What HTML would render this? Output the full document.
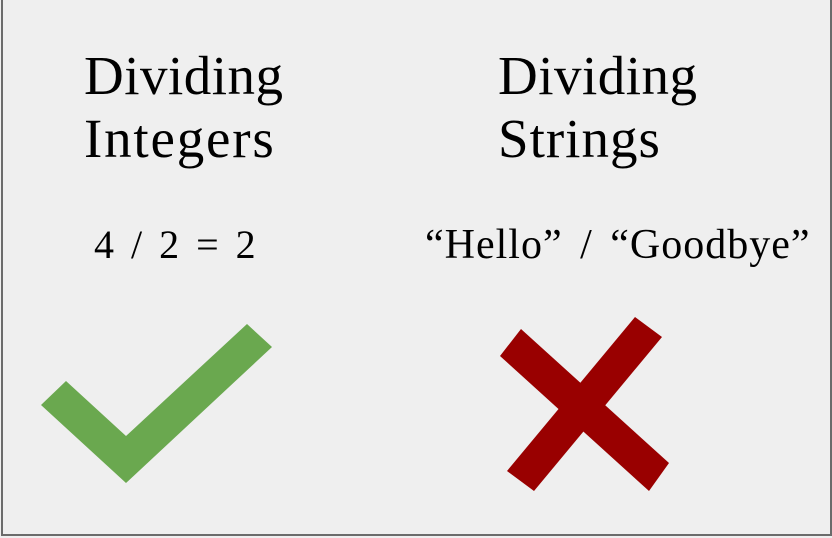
<!DOCTYPE html>
<html><head><style>
html,body{margin:0;padding:0;background:#efefef;}
body{width:832px;height:538px;position:relative;overflow:hidden;font-family:"Liberation Serif",serif;color:#000;}
.frame{position:absolute;left:1px;top:0;width:827px;height:534px;border:2px solid #6b6b6b;border-top:none;}
.t{position:absolute;white-space:nowrap;line-height:1;}
</style></head><body>
<div class="frame"></div>
<div class="t" style="left:84px;top:48px;font-size:55px;letter-spacing:0.5px;">Dividing</div>
<div class="t" style="left:84px;top:111px;font-size:55px;letter-spacing:1.8px;">Integers</div>
<div class="t" style="left:498px;top:48px;font-size:55px;letter-spacing:0.5px;">Dividing</div>
<div class="t" style="left:498px;top:111px;font-size:55px;letter-spacing:1px;">Strings</div>
<div class="t" style="left:94px;top:225px;font-size:40px;letter-spacing:2px;word-spacing:3px;">4 / 2 = 2</div>
<div class="t" style="left:425px;top:224px;font-size:42px;letter-spacing:1px;word-spacing:6px;">“Hello” / “Goodbye”</div>
<svg width="832" height="538" style="position:absolute;left:0;top:0">
<polygon fill="#6aa84f" points="41,405 66,381 126,436 247,324 272,347 126,483"/>
<polygon fill="#990000" points="500,356 521,329 669,463 649,491"/>
<polygon fill="#990000" points="635,317 662,337 534,491 507,471"/>
</svg>
</body></html>
